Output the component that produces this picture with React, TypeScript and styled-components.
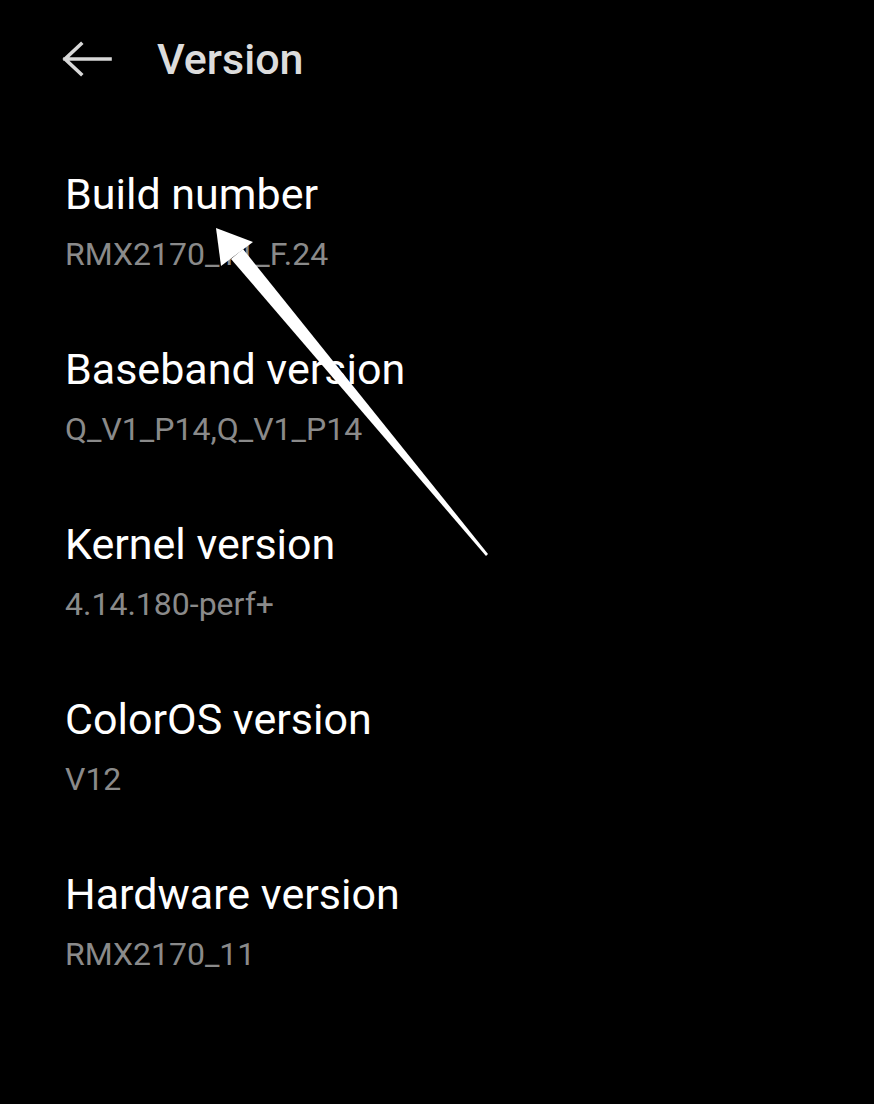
import React from "react";
import styled, { createGlobalStyle } from "styled-components";

const Global = createGlobalStyle`
  html, body { margin: 0; padding: 0; background: #000; }
  body { font-family: Roboto, "Noto Sans", sans-serif; -webkit-font-smoothing: antialiased; }
`;

const Screen = styled.div`
  position: relative;
  width: 874px;
  height: 1104px;
  background: #000;
  overflow: hidden;
`;

const Header = styled.header`
  display: flex;
  align-items: center;
  height: 50px;
  padding: 34px 0 0 61px;
`;

const BackButton = styled.button`
  display: flex;
  align-items: center;
  justify-content: center;
  width: 52px;
  height: 50px;
  padding: 0;
  margin-right: 44px;
  border: none;
  background: none;
`;

const Title = styled.h1`
  margin: 0;
  font-size: 43px;
  line-height: 50px;
  font-weight: 500;
  color: #dcdcdc;
`;

const List = styled.ul`
  list-style: none;
  margin: 0;
  padding: 85px 0 0 65px;
  display: flex;
  flex-direction: column;
  gap: 70px;
`;

const Item = styled.li`
  display: flex;
  flex-direction: column;
  gap: 15px;
`;

const ItemTitle = styled.div`
  font-size: 43px;
  line-height: 50px;
  color: #ffffff;
`;

const ItemValue = styled.div`
  font-size: 32px;
  line-height: 40px;
  color: #8a8a8a;
`;

const Overlay = styled.svg`
  position: absolute;
  left: 0;
  top: 0;
  pointer-events: none;
`;

const items = [
  ["Build number", "RMX2170_11_F.24"],
  ["Baseband version", "Q_V1_P14,Q_V1_P14"],
  ["Kernel version", "4.14.180-perf+"],
  ["ColorOS version", "V12"],
  ["Hardware version", "RMX2170_11"],
];

export default function App() {
  return (
    <Screen>
      <Global />
      <Header>
        <BackButton aria-label="Back">
          <svg width="52" height="40" viewBox="0 0 52 40">
            <path
              d="M4 20 H49 M20 5 L4 20 L20 35"
              fill="none"
              stroke="#d8d8d8"
              strokeWidth="3.6"
              strokeLinecap="square"
            />
          </svg>
        </BackButton>
        <Title>Version</Title>
      </Header>
      <List>
        {items.map(([t, v]) => (
          <Item key={t}>
            <ItemTitle>{t}</ItemTitle>
            <ItemValue>{v}</ItemValue>
          </Item>
        ))}
      </List>
      <Overlay width="874" height="1104" viewBox="0 0 874 1104">
        <polygon points="216,228 253,242 221,266" fill="#fff" />
        <polygon points="243,249 488,554 486,556 231,259" fill="#fff" />
      </Overlay>
    </Screen>
  );
}
